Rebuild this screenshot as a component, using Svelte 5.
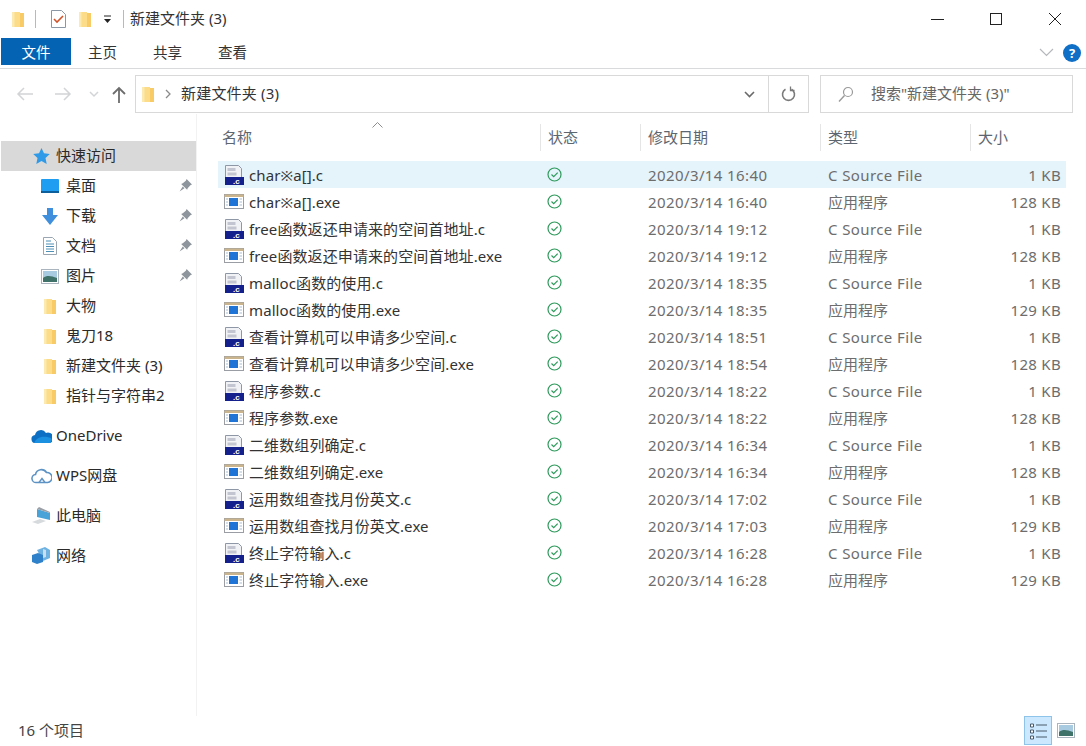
<script>
  const base = [
    ['char※a[]', '16:40', '16:40', '1 KB', '128 KB'],
    ['free函数返还申请来的空间首地址', '19:12', '19:12', '1 KB', '128 KB'],
    ['malloc函数的使用', '18:35', '18:35', '1 KB', '129 KB'],
    ['查看计算机可以申请多少空间', '18:51', '18:54', '1 KB', '128 KB'],
    ['程序参数', '18:22', '18:22', '1 KB', '128 KB'],
    ['二维数组列确定', '16:34', '16:34', '1 KB', '128 KB'],
    ['运用数组查找月份英文', '17:02', '17:03', '1 KB', '129 KB'],
    ['终止字符输入', '16:28', '16:28', '1 KB', '129 KB']
  ];
  const files = base.flatMap(([n, t1, t2, s1, s2]) => [
    { name: n + '.c', kind: 'c', time: t1, type: 'C Source File', size: s1 },
    { name: n + '.exe', kind: 'exe', time: t2, type: '应用程序', size: s2 }
  ]);
  const quick = [
    { label: '桌面', icon: 'desktop', pin: true },
    { label: '下载', icon: 'download', pin: true },
    { label: '文档', icon: 'doc', pin: true },
    { label: '图片', icon: 'pic', pin: true },
    { label: '大物', icon: 'folder' },
    { label: '鬼刀18', icon: 'folder' },
    { label: '新建文件夹 (3)', icon: 'folder' },
    { label: '指针与字符串2', icon: 'folder' }
  ];
  const roots = [
    { label: 'OneDrive', icon: 'cloud' },
    { label: 'WPS网盘', icon: 'wps' },
    { label: '此电脑', icon: 'pc' },
    { label: '网络', icon: 'net' }
  ];
</script>

{#snippet folder()}
  <svg class="ic-folder" width="14" height="17" viewBox="0 0 14 17">
    <path d="M1 1h8v1h4v14H1z" fill="#fcdc88"/>
    <path d="M1 1h2.500v15H1z" fill="#fdeab0"/>
    <path d="M9 2h4v14H9z" fill="#f8cb66"/>
  </svg>
{/snippet}

{#snippet pic()}
  <svg width="18" height="15" viewBox="0 0 18 15">
    <rect x=".5" y=".5" width="17" height="14" fill="#fff" stroke="#a9b4bf"/>
    <rect x="2" y="2" width="14" height="11" fill="#a9cbe2"/>
    <path d="M2 9c4-3 8-2 14 0v4H2z" fill="#3f7268"/>
  </svg>
{/snippet}

{#snippet navIcon(name)}
  {#if name === 'folder'}{@render folder()}
  {:else if name === 'desktop'}
    <svg width="20" height="14" viewBox="0 0 20 14"><rect x="1" y="0" width="18" height="13" rx="1" fill="#1f9df0"/><rect x="1" y="12" width="18" height="2" fill="#0d5f9c"/></svg>
  {:else if name === 'download'}
    <svg width="18" height="17" viewBox="0 0 18 17"><path d="M6 0h6v7h5l-8 10L1 7h5z" fill="#3f8fdc"/></svg>
  {:else if name === 'doc'}
    <svg width="14" height="18" viewBox="0 0 14 18"><path d="M.5.5h9l4 4v13H.5z" fill="#fff" stroke="#9aa7b2"/><path d="M3 4h5M3 7h8M3 9.500h8M3 12h8M3 14.500h8" stroke="#4d8fb5"/></svg>
  {:else if name === 'pic'}{@render pic()}
  {:else if name === 'cloud'}
    <svg width="21" height="14" viewBox="0 0 21 14"><path d="M5 14a4 4 0 0 1-1-8 6 6 0 0 1 11-2 5 5 0 0 1 4 10z" fill="#0c6fc4"/><path d="M3 14c2-5 8-8 17-5l1 2-2 3z" fill="#1b8fe0"/></svg>
  {:else if name === 'wps'}
    <svg width="21" height="16" viewBox="0 0 21 16"><path d="M5.500 14.500a4 4 0 0 1-1-8 6 6 0 0 1 11-2 5 5 0 0 1 1 10z" fill="#fff" stroke="#5d93c4" stroke-width="1.600"/><path d="M8 14.500l3-4 3 4" fill="none" stroke="#5d93c4" stroke-width="1.400"/></svg>
  {:else if name === 'pc'}
    <svg width="20" height="18" viewBox="0 0 20 18"><path d="M6 2l13 4v7L6 10z" fill="#4aa3d8"/><path d="M6 2l2-2 11 5v1z" fill="#9a9fa6"/><path d="M1 15l8-3 6 2-8 3z" fill="#d7dadd"/></svg>
  {:else if name === 'net'}
    <svg width="20" height="18" viewBox="0 0 20 18"><path d="M6 3l8-3 5 3v8l-7 3z" fill="#6eb2e2"/><path d="M1 8l6-2 5 2v7l-6 2-5-2z" fill="#2f82c9"/><path d="M12 2l3 1v7l-3 1z" fill="#c9dff0"/></svg>
  {/if}
{/snippet}

<div class="win">
  <header class="title">
    {@render folder()}
    <span class="vsep"></span>
    <svg class="check" width="15" height="18" viewBox="0 0 15 18"><path d="M.5.500h10l4 4v13H.5z" fill="#fff" stroke="#8b97a5"/><path d="M3 9l3 3 6-6" fill="none" stroke="#d0532a" stroke-width="1.600"/></svg>
    {@render folder()}
    <svg class="qa" width="9" height="9" viewBox="0 0 9 9"><path d="M1 1h7" stroke="#222"/><path d="M1 4h7L4.500 8z" fill="#222"/></svg>
    <span class="vsep"></span>
    <span class="title-text">新建文件夹 (3)</span>
    <div class="controls">
      <svg width="14" height="14" viewBox="0 0 14 14"><path d="M1 7.500h13" stroke="#222"/></svg>
      <svg width="14" height="14" viewBox="0 0 14 14"><rect x="1.500" y="1.500" width="11" height="11" fill="none" stroke="#222"/></svg>
      <svg width="14" height="14" viewBox="0 0 14 14"><path d="M1 1l12 12M13 1L1 13" stroke="#222"/></svg>
    </div>
  </header>

  <nav class="tabs">
    <span class="tab file">文件</span>
    <span class="tab">主页</span>
    <span class="tab">共享</span>
    <span class="tab">查看</span>
    <svg class="expand" width="15" height="9" viewBox="0 0 15 9"><path d="M1 1l6.500 6.500L14 1" fill="none" stroke="#b5b8bb" stroke-width="1.200"/></svg>
    <span class="help">?</span>
  </nav>

  <div class="navbar">
    <div class="arrows">
      <svg class="back" width="18" height="14" viewBox="0 0 18 14"><path d="M17 7H2M8 1L2 7l6 6" fill="none" stroke="#d2d4d6" stroke-width="1.500"/></svg>
      <svg class="fwd" width="18" height="14" viewBox="0 0 18 14"><path d="M1 7h15M10 1l6 6-6 6" fill="none" stroke="#d2d4d6" stroke-width="1.500"/></svg>
      <svg class="hist" width="10" height="7" viewBox="0 0 10 7"><path d="M1 1l4 4 4-4" fill="none" stroke="#d2d4d6" stroke-width="1.500"/></svg>
      <svg class="up" width="14" height="17" viewBox="0 0 14 17"><path d="M7 17V2M1 8l6-6 6 6" fill="none" stroke="#6d6d6d" stroke-width="1.800"/></svg>
    </div>
    <div class="address">
      {@render folder()}
      <svg class="crumb" width="6" height="10" viewBox="0 0 6 10"><path d="M1 1l4 4-4 4" fill="none" stroke="#8a8a8a" stroke-width="1.300"/></svg>
      <span class="addr-text">新建文件夹 (3)</span>
      <svg class="addr-drop" width="11" height="7" viewBox="0 0 11 7"><path d="M1 1l4.500 4.500L10 1" fill="none" stroke="#6a6a6a" stroke-width="1.600"/></svg>
      <div class="refresh">
        <svg width="15" height="16" viewBox="0 0 15 16"><path d="M10.500 3.200a6 6 0 1 1-6 0" fill="none" stroke="#7a7a7a" stroke-width="1.600"/><path d="M9.500 .5v4h4" fill="none" stroke="#7a7a7a" stroke-width="1.300"/></svg>
      </div>
    </div>
    <div class="search">
      <svg width="16" height="17" viewBox="0 0 16 17"><circle cx="10" cy="6" r="4.500" fill="none" stroke="#9a9a9a" stroke-width="1.200"/><path d="M6.500 9.500L1 15.500" stroke="#9a9a9a" stroke-width="1.400"/></svg>
      <span>搜索"新建文件夹 (3)"</span>
    </div>
  </div>

  <div class="body">
    <aside class="side">
      <div class="side-row head active">
        <svg width="17" height="16" viewBox="0 0 17 16"><path d="M8.500 0l2.500 5.300 5.800.7-4.300 4 1.200 6-5.200-3-5.200 3 1.200-6L.2 6 6 5.300z" fill="#2f9be8"/></svg>
        <span>快速访问</span>
      </div>
      {#each quick as q}
        <div class="side-row sub">
          <span class="side-ic">{@render navIcon(q.icon)}</span>
          <span>{q.label}</span>
          {#if q.pin}
            <svg class="pin" width="13" height="13" viewBox="0 0 12 12"><path d="M7 0l5 5-1.500.7L8 8.500 7.500 10 2 4.500 3.500 4l2.800-2.500zM3.500 7L.5 11.500 5 8.500z" fill="#8f959c"/></svg>
          {/if}
        </div>
      {/each}
      {#each roots as r}
        <div class="side-row head root">
          <span class="side-ic root-ic">{@render navIcon(r.icon)}</span>
          <span>{r.label}</span>
        </div>
      {/each}
    </aside>

    <main class="list">
      <div class="cols header">
        <span class="name-h">名称<svg class="sort" width="11" height="6" viewBox="0 0 11 6"><path d="M.5 5.500l5-5 5 5" fill="none" stroke="#8d8d8d"/></svg></span>
        <span>状态</span>
        <span>修改日期</span>
        <span>类型</span>
        <span>大小</span>
      </div>
      <div class="rows">
        {#each files as f, i}
          <div class="cols row" class:sel={i === 0}>
            <span class="fname">
              {#if f.kind === 'c'}
                <svg width="20" height="20" viewBox="0 0 20 20"><path d="M1.500.5h13l3 3V13h-16z" fill="#f1f2f5" stroke="#8e97a6"/><path d="M3.500 3h8v3h-8zM3.500 7.500h9v3h-9z" fill="#c3c6d0"/><rect x="1" y="12" width="19" height="8" fill="#14208c"/><text x="9" y="19" class="dotc">.c</text></svg>
              {:else}
                <svg width="20" height="16" viewBox="0 0 20 16"><rect x=".5" y=".5" width="19" height="14" fill="#fff" stroke="#9a9da3"/><rect x=".5" y=".5" width="19" height="2.500" fill="#c9b48e"/><rect x="5" y="4" width="9" height="8" fill="#1f74d6"/><path d="M15.500 5h2.500M15.500 8h2.500M15.500 11h2.500M2 5h2M2 8h2M2 11h2" stroke="#a9bdd3"/></svg>
              {/if}
              <span>{f.name}</span>
            </span>
            <span class="status">
              <svg width="15" height="15" viewBox="0 0 15 15"><circle cx="7.500" cy="7.500" r="6.500" fill="none" stroke="#2e9a5b" stroke-width="1.200"/><path d="M4.500 7.500l2.200 2.200 4-4" fill="none" stroke="#2e9a5b" stroke-width="1.200"/></svg>
            </span>
            <span class="dim latin">2020/3/14 {f.time}</span>
            <span class="dim" class:latin={f.kind === 'c'}>{f.type}</span>
            <span class="dim size">{f.size}</span>
          </div>
        {/each}
      </div>
    </main>
  </div>

  <footer class="statusbar">
    <span>16 个项目</span>
    <div class="views">
      <span class="view on">
        <svg width="18" height="18" viewBox="0 0 18 18"><path d="M1.500 2h3v3h-3zM1.500 8h3v3h-3zM1.500 14h3v3h-3z" fill="#fff" stroke="#4a5a68"/><path d="M7 3h11M7 9h11M7 15h11" stroke="#4a5a68"/></svg>
      </span>
      <span class="view">{@render pic()}</span>
    </div>
  </footer>
</div>

<style>
  :global(body) { margin: 0; background: #fff; }
  .win {
    width: 1086px; height: 746px; display: flex; flex-direction: column; overflow: hidden;
    background: #fff; color: #2a2a2a; font: 15px/20px "Noto Sans", "Noto Sans CJK SC", sans-serif;
  }
  svg { display: block; flex: none; }
  .title { height: 38px; display: flex; align-items: center; padding-left: 11px; box-sizing: border-box; }
  .vsep { width: 1px; height: 18px; background: #b9b9b9; margin: 0 10px; }
  .check { margin: 0 12px 0 5px; }
  .qa { margin-left: 11px; margin-right: 1px; }
  .title-text { color: #333; margin-left: -4px; padding-bottom: 2px; }
  .controls { margin-left: auto; display: flex; gap: 45px; padding-right: 24px; }
  .tabs { height: 31px; display: flex; align-items: stretch; border-bottom: 1px solid #d9dadb; box-sizing: border-box; padding-left: 1px; }
  .tab { width: 65px; display: flex; align-items: center; justify-content: center; margin-bottom: 3px; font-size: 14.500px; color: #333; }
  .tab.file { width: 70px; background: #0563b3; color: #fff; margin-right: -1px; }
  .expand { margin: 10px 0 0 auto; }
  .help {
    width: 18px; height: 18px; border-radius: 50%; background: #0f6fc6; color: #fff; font-weight: 700; font-size: 13px;
    line-height: 18px; text-align: center; margin: 6px 5px 0 9px;
  }
  .navbar { height: 38px; margin: 6px 0 1px; display: flex; }
  .arrows { width: 135px; display: flex; align-items: center; padding-left: 16px; box-sizing: border-box; }
  .fwd { margin-left: 20px; }
  .hist { margin-left: 17px; }
  .up { margin-left: 13px; }
  .address { width: 674px; border: 1px solid #d9d9d9; box-sizing: border-box; display: flex; align-items: center; padding-left: 5px; }
  .crumb { margin: 0 10px 0 10px; }
  .addr-text { color: #333; letter-spacing: .2px; padding-bottom: 2px; }
  .addr-drop { margin-left: auto; margin-right: 13px; }
  .refresh { width: 39px; height: 100%; border-left: 1px solid #d9d9d9; display: flex; align-items: center; justify-content: center; }
  .search { width: 253px; margin-left: 11px; border: 1px solid #d9d9d9; box-sizing: border-box; display: flex; align-items: center; gap: 17px; padding-left: 17px; color: #666; }
  .search span { padding-bottom: 2px; }
  .body { flex: 1; display: flex; min-height: 0; }
  .side { width: 197px; flex: none; padding-top: 27px; margin-right: 21px; border-right: 1px solid #f2f2f2; box-sizing: border-box; }
  .side-row { height: 30px; display: flex; align-items: center; }
  .side-row > span:not(.side-ic) { padding-bottom: 2px; }
  .head { padding-left: 33px; gap: 6px; }
  .active { background: #d9d9d9; margin-left: 1px; padding-left: 32px; }
  .sub { padding-left: 40px; position: relative; }
  .side-ic { width: 20px; display: flex; justify-content: center; margin-right: 6px; }
  .root { margin-top: 10px; padding-left: 31px; gap: 0; }
  .root-ic { width: 20px; margin-right: 5px; }
  .pin { position: absolute; right: 4px; top: 8px; }
  .list { flex: 1; min-width: 0; padding-top: 8px; }
  .cols { display: grid; grid-template-columns: 322px 100px 180px 150px 96px; width: 848px; align-items: center; }
  .header { height: 31px; color: #5c6670; }
  .header > span { height: 27px; line-height: 27px; border-left: 1px solid #e5e5e5; padding-left: 7px; }
  .header > .name-h { border-left: 0; padding-left: 4px; position: relative; }
  .sort { position: absolute; left: 154px; top: -2px; }
  .rows { margin-top: 8px; }
  .row { height: 27px; }
  .sel { background: #e5f3fb; }
  .fname { display: flex; align-items: center; gap: 5px; padding-left: 6px; color: #333; white-space: nowrap; letter-spacing: .1px; }
  .dotc { font: 700 8px "Liberation Sans", sans-serif; fill: #fff; }
  .status { padding-left: 7px; }
  .dim { color: #6d6d6d; padding-left: 8px; }
  .latin { letter-spacing: .4px; }
  .size { text-align: right; padding-right: 5px; letter-spacing: .3px; }
  .statusbar { height: 30px; display: flex; align-items: center; padding-left: 18px; color: #444; }
  .statusbar > span { padding-bottom: 2px; }
  .views { margin-left: auto; display: flex; align-self: flex-start; margin-right: 6px; }
  .view { width: 28px; height: 29px; display: flex; align-items: center; justify-content: center; box-sizing: border-box; }
  .view.on { background: #cce8ff; border: 1px solid #8fc4ea; }
</style>
